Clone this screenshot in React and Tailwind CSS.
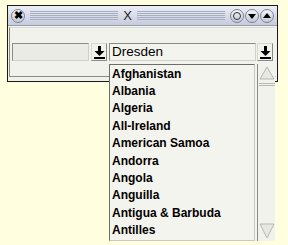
import React from 'react'

const COUNTRIES = [
  'Afghanistan', 'Albania', 'Algeria', 'All-Ireland', 'American Samoa',
  'Andorra', 'Angola', 'Anguilla', 'Antigua & Barbuda', 'Antilles',
]

function DownArrow() {
  return (
    <svg width="11" height="13" viewBox="0 0 11 13">
      <rect x="4" y="0" width="3" height="5" fill="#000" />
      <polygon points="0.5,5 10.5,5 5.5,10" fill="#000" />
      <rect x="0" y="11" width="11" height="2" fill="#000" />
    </svg>
  )
}

function ArrowButton() {
  return (
    <div className="w-[16px] h-[18px] flex items-center justify-center border border-t-[#d8d8d0] border-l-[#d8d8d0] border-r-[#8a8a84] border-b-[#8a8a84] bg-[#f2f2ec]">
      <DownArrow />
    </div>
  )
}

function Stripes() {
  return (
    <div className="flex-1 flex flex-col gap-[1px] justify-center">
      {[0, 1, 2, 3, 4].map((i) => (
        <div key={i} className="h-[1px] bg-[#f8f9fc] border-b border-[#a9afc2]" />
      ))}
    </div>
  )
}

function RoundButton({ children }) {
  return (
    <div className="w-[14px] h-[14px] rounded-full border border-[#7d8294] bg-gradient-to-b from-[#f4f5f9] to-[#c3c8d6] flex items-center justify-center">
      {children}
    </div>
  )
}

export default function App() {
  return (
    <div className="w-[288px] h-[245px] bg-[#ffffe0] relative overflow-hidden pt-[5px] pl-[7px] font-['Liberation_Sans',Arial,sans-serif]">
      {/* window */}
      <div className="w-[271px] h-[77px] border border-[#1a1a1a] bg-[#f2f2ec] flex flex-col">
        {/* title bar */}
        <div className="h-[20px] flex items-center gap-[5px] px-[3px] bg-gradient-to-b from-[#eceef7] to-[#c6cbdc] border-b border-[#9aa0b2]">
          <RoundButton>
            <span className="text-[11px] leading-none font-bold text-black">✖</span>
          </RoundButton>
          <Stripes />
          <span className="text-[13px] leading-none text-[#222]">X</span>
          <Stripes />
          <div className="flex gap-[1px]">
            <RoundButton>
              <div className="w-[8px] h-[8px] rounded-full border border-[#333]" />
            </RoundButton>
            <RoundButton>
              <div className="w-0 h-0 border-l-[4px] border-r-[4px] border-t-[5px] border-l-transparent border-r-transparent border-t-black mt-[1px]" />
            </RoundButton>
            <RoundButton>
              <div className="w-0 h-0 border-l-[4px] border-r-[4px] border-b-[5px] border-l-transparent border-r-transparent border-b-black mb-[1px]" />
            </RoundButton>
          </div>
        </div>
        {/* body frame */}
        <div className="flex-1 m-[1px] mb-[4px] border border-l-[#8c8c86] border-t-[#dcdcd4] border-b-[#8c8c86] border-r-[#f2f2ec] pt-[15px] pl-[2px]">
          <div className="flex items-center">
            <div className="w-[77px] h-[18px] bg-[#ebebe5] border border-t-[#8c8c86] border-l-[#8c8c86] border-b-[#d0d0c8] border-r-[#d0d0c8]" />
            <div className="ml-[2px]"><ArrowButton /></div>
            <div className="ml-[2px] w-[147px] h-[18px] bg-[#f4f4ee] border border-t-[#8c8c86] border-l-[#8c8c86] border-b-[#d0d0c8] border-r-[#d0d0c8] flex items-center pl-[2px]">
              <span className="text-[13.5px] leading-none text-black">Dresden</span>
            </div>
            <div className="ml-[1px]"><ArrowButton /></div>
          </div>
        </div>
      </div>

      {/* dropdown popup */}
      <div className="absolute left-[109px] top-[64px] w-[166px] h-[177px] flex bg-[#f4f4ee]">
        <div className="flex-1 border border-l-[#6e6e68] border-t-[#6e6e68] border-r-[#c8c8c0] border-b-[#c8c8c0] pl-[2px]">
          {COUNTRIES.map((c) => (
            <div key={c} className="h-[17.4px] flex items-center text-[12px] font-bold text-black leading-none">
              {c}
            </div>
          ))}
        </div>
        <div className="w-[18px] ml-[2px] border-l border-[#8c8c86] flex flex-col justify-between py-[2px] bg-[#f2f2ec]">
          <div className="flex flex-col items-center">
            <svg width="16" height="14" viewBox="0 0 16 14">
              <polygon points="8,1 15,13 1,13" fill="#e8e8e2" stroke="#b8b8b0" strokeWidth="1" />
            </svg>
            <div className="w-[16px] h-[1px] bg-[#b8b8b0] mt-[3px]" />
            <div className="w-[16px] h-[1px] bg-[#b8b8b0] mt-[1px]" />
          </div>
          <svg width="16" height="16" viewBox="0 0 16 16" className="mx-auto">
            <polygon points="1,1 15,1 8,15" fill="#e8e8e2" stroke="#b8b8b0" strokeWidth="1" />
          </svg>
        </div>
      </div>
    </div>
  )
}
